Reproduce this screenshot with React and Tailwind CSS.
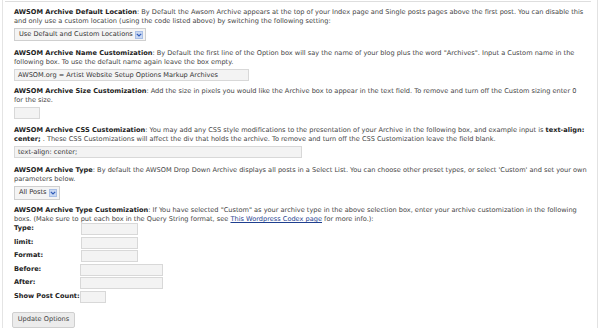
import React from 'react'

// Verdana-like small admin text
const FONT = "font-['DejaVu_Sans',Verdana,sans-serif]"

function Field({ className = '', value = '' }) {
  return (
    <div
      className={`h-[12px] border border-[#d8d8d8] bg-[#f3f3f3] px-[3px] text-[6.6px] leading-[10px] text-[#333] ${className}`}
    >
      {value}
    </div>
  )
}

function Select({ label, className = '' }) {
  return (
    <div
      className={`flex h-[13px] items-center gap-[2px] border border-[#cfcfcf] bg-[#f4f4f4] pl-[4px] pr-[2px] text-[6.6px] text-[#333] ${className}`}
    >
      <span>{label}</span>
      <span className="flex h-[8px] w-[8px] items-center justify-center bg-[#c9d8f2] border border-[#a9bfe6]">
        <svg width="6" height="4" viewBox="0 0 6 4">
          <path d="M0.8 0.8 L3 3 L5.2 0.8" fill="none" stroke="#2f5bb7" strokeWidth="1.2" />
        </svg>
      </span>
    </div>
  )
}

function Section({ title, children, field, className = '' }) {
  return (
    <div className={className}>
      <p className="text-[6.6px] leading-[9px] text-[#444]">
        <b className="text-[#222]">{title}</b>: {children}
      </p>
      {field}
    </div>
  )
}

const QUERY_FIELDS = [
  { label: 'Type:', w: 'w-[57px] ml-[67px]' },
  { label: 'limit:', w: 'w-[57px] ml-[67px]' },
  { label: 'Format:', w: 'w-[57px] ml-[67px]' },
  { label: 'Before:', w: 'w-[83px] ml-[66px]' },
  { label: 'After:', w: 'w-[83px] ml-[66px]' },
  { label: 'Show Post Count:', w: 'w-[26px] ml-[66px]' },
]

export default function App() {
  return (
    <div className={`flex h-[328px] w-[600px] overflow-hidden bg-white ${FONT}`}>
      <div className="w-[2px]" />
      <div className="w-px bg-[#e4e4e4]" />
      <div className="flex-1 pl-[2px]">
        <div className="mr-[6px] mt-px border-t border-[#dedede] pl-[9px] pr-[4px] pt-[6px]">
          {/* ── Default location ── */}
          <Section
            title="AWSOM Archive Default Location"
            field={<Select label="Use Default and Custom Locations" className="mt-[2px] w-fit" />}
          >
            By Default the Awsom Archive appears at the top of your Index page and Single posts pages above the first
            post. You can disable this and only use a custom location (using the code listed above) by switching the
            following setting:
          </Section>

          {/* ── Name ── */}
          <Section
            className="mt-[8px]"
            title="AWSOM Archive Name Customization"
            field={<Field className="mt-[2px] w-[235px]" value="AWSOM.org = Artist Website Setup Options Markup Archives" />}
          >
            By Default the first line of the Option box will say the name of your blog plus the word "Archives". Input a
            Custom name in the following box. To use the default name again leave the box empty.
          </Section>

          {/* ── Size ── */}
          <Section
            className="mt-[6px]"
            title="AWSOM Archive Size Customization"
            field={<Field className="mt-[2px] w-[26px]" />}
          >
            Add the size in pixels you would like the Archive box to appear in the text field. To remove and turn off
            the Custom sizing enter 0 for the size.
          </Section>

          {/* ── CSS ── */}
          <Section
            className="mt-[7px]"
            title="AWSOM Archive CSS Customization"
            field={<Field className="mt-[2px] w-[288px]" value="text-align: center;" />}
          >
            You may add any CSS style modifications to the presentation of your Archive in the following box, and
            example input is <b className="text-[#222]">text-align: center;</b> . These CSS Customizations will affect
            the div that holds the archive. To remove and turn off the CSS Customization leave the field blank.
          </Section>

          {/* ── Type ── */}
          <Section
            className="mt-[8px]"
            title="AWSOM Archive Type"
            field={<Select label="All Posts" className="mt-[2px] h-[14px] w-fit" />}
          >
            By default the AWSOM Drop Down Archive displays all posts in a Select List. You can choose other preset
            types, or select 'Custom' and set your own parameters below.
          </Section>

          {/* ── Type customization ── */}
          <Section className="mt-[6px]" title="AWSOM Archive Type Customization">
            If You have selected "Custom" as your archive type in the above selection box, enter your archive
            customization in the following boxs. (Make sure to put each box in the Query String format, see{' '}
            <span className="text-[#1f3f8f] underline">This Wordpress Codex page</span> for more info.):
          </Section>

          <div className="-mt-px flex flex-col gap-[1.5px]">
            {QUERY_FIELDS.map((f) => (
              <div key={f.label} className="relative flex h-[12px] items-center">
                <span className="absolute left-0 text-[6.6px] font-bold text-[#222]">{f.label}</span>
                <Field className={f.w} />
              </div>
            ))}
          </div>

          <button className="-ml-[2px] mt-[9px] h-[16px] w-[63px] rounded-[2px] border border-[#cfcfcf] bg-[#ececec] text-[6.6px] text-[#444]">
            Update Options
          </button>
        </div>
      </div>
      <div className="mr-[2px] w-px bg-[#e2e2e2]" />
    </div>
  )
}
